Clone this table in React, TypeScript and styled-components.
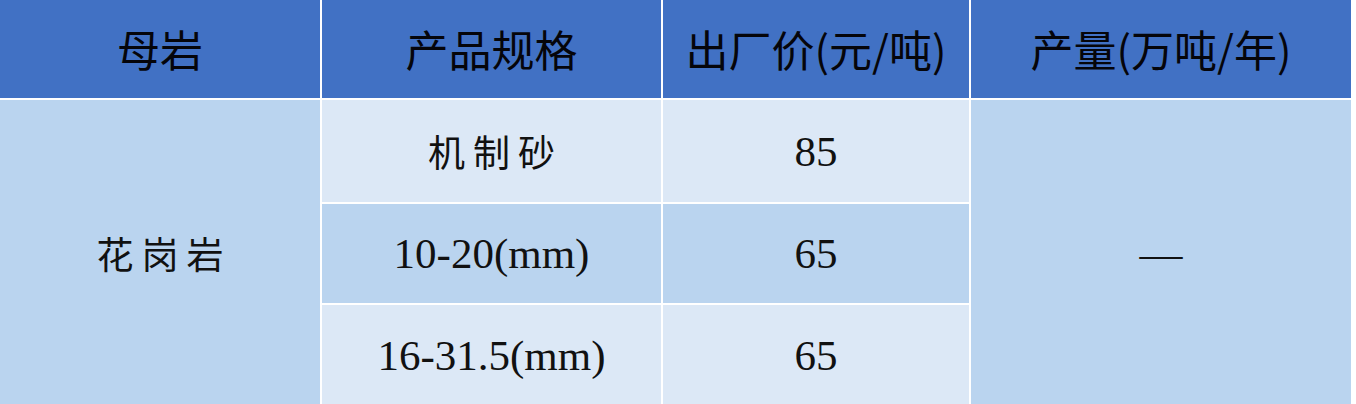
import styled, { createGlobalStyle } from "styled-components";

const GlobalStyle = createGlobalStyle`
  html, body {
    margin: 0;
    padding: 0;
    background: #ffffff;
  }
  body {
    overflow: hidden;
  }
`;

const Table = styled.div`
  display: grid;
  grid-template-columns: 320px 339px 306px 380px;
  grid-template-rows: 98px 102px 99px 101px;
  gap: 2px;
  width: 1351px;
  height: 406px;
  background: #ffffff;
`;

const HeadCell = styled.div`
  display: flex;
  align-items: center;
  justify-content: center;
  background: #4171c4;
  color: #05050a;
  font-family: "Noto Sans CJK SC", "Liberation Sans", sans-serif;
  font-size: 43px;
  font-weight: 400;
  padding-bottom: 2px;
`;

const Cell = styled.div<{ $tone: "light" | "mid"; $span?: number }>`
  display: flex;
  align-items: center;
  justify-content: center;
  grid-row: ${(p) => (p.$span ? `span ${p.$span}` : "auto")};
  background: ${(p) => (p.$tone === "light" ? "#dce8f6" : "#bad4ef")};
  color: #111111;
  font-family: "Liberation Serif", "Noto Sans CJK SC", serif;
  font-size: 43px;
`;

const Hanzi = styled.span`
  font-family: "Noto Sans CJK SC", sans-serif;
  font-size: 37px;
  font-weight: 400;
  letter-spacing: 8px;
  margin-right: -8px;
`;

const rows = [
  { spec: <Hanzi>机制砂</Hanzi>, price: "85", tone: "light" as const },
  { spec: "10-20(mm)", price: "65", tone: "mid" as const },
  { spec: "16-31.5(mm)", price: "65", tone: "light" as const },
];

export default function App() {
  return (
    <>
      <GlobalStyle />
      <Table>
        <HeadCell>母岩</HeadCell>
        <HeadCell>产品规格</HeadCell>
        <HeadCell>出厂价(元/吨)</HeadCell>
        <HeadCell>产量(万吨/年)</HeadCell>

        <Cell $tone="mid" $span={3}>
          <Hanzi>花岗岩</Hanzi>
        </Cell>
        <Cell $tone={rows[0].tone}>{rows[0].spec}</Cell>
        <Cell $tone={rows[0].tone}>{rows[0].price}</Cell>
        <Cell $tone="mid" $span={3}>—</Cell>

        {rows.slice(1).map((r, i) => (
          <Row key={i} spec={r.spec} price={r.price} tone={r.tone} />
        ))}
      </Table>
    </>
  );
}

function Row({ spec, price, tone }: { spec: React.ReactNode; price: string; tone: "light" | "mid" }) {
  return (
    <>
      <Cell $tone={tone}>{spec}</Cell>
      <Cell $tone={tone}>{price}</Cell>
    </>
  );
}
